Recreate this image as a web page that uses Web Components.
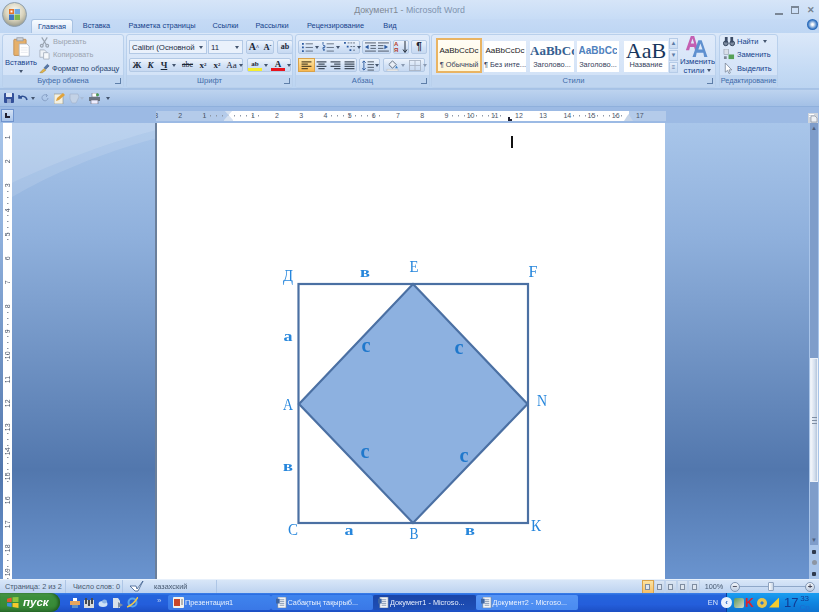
<!DOCTYPE html>
<html lang="ru"><head><meta charset="utf-8"><title>Word</title>
<style>html,body{margin:0;padding:0;overflow:hidden;background:#8fb0dc}body{font-family:"Liberation Sans",sans-serif}</style>
</head><body>
<x-word></x-word>
<script>
const IC={
paste:'<svg width="19" height="20" viewBox="0 0 24 26"><rect x="2" y="3" width="16" height="21" rx="1" fill="#e6b06a" stroke="#b8864a"/><rect x="6" y="1" width="8" height="4" fill="#d0d3d8" stroke="#939aa5"/><path d="M9 9h10l3 3v13H9z" fill="#fff" stroke="#a6b2c4"/><path d="M11 14h9M11 17h9M11 20h9" stroke="#e0e4ea"/></svg>',
scissors:'<svg width="11" height="12" viewBox="0 0 12 12" fill="none" stroke="#9aa4b1" stroke-width="1.3"><path d="M3 1l5 8M9 1L4 9"/><circle cx="3" cy="10" r="1.5"/><circle cx="9" cy="10" r="1.5"/></svg>',
copy:'<svg width="11" height="11" viewBox="0 0 12 12"><path d="M1 1h5l2 2v6H1z" fill="#eef2f7" stroke="#aab4c2"/><path d="M5 4h5l1 1v6H5z" fill="#f6f8fb" stroke="#aab4c2"/></svg>',
painter:'<svg width="11" height="11" viewBox="0 0 13 12"><path d="M1 11l5-5 2 2-4 3z" fill="#e6b84a" stroke="#9b7a2a" stroke-width=".6"/><path d="M6 5l4-4 2 2-4 4z" fill="#5577a8" stroke="#34507c" stroke-width=".6"/></svg>',
bullets:'<svg width="12" height="10" viewBox="0 0 13 11"><path d="M1 1h2v2H1zM1 5h2v2H1zM1 9h2v2H1z" fill="#2b5aa0"/><path d="M5 2h8M5 6h8M5 10h8" stroke="#5d6a7c"/></svg>',
numbers:'<svg width="12" height="10" viewBox="0 0 13 11"><path d="M1 0v3M1 4h2v2H1v2h2M1 9h2" stroke="#2b5aa0" fill="none"/><path d="M5 2h8M5 6h8M5 10h8" stroke="#5d6a7c"/></svg>',
multi:'<svg width="13" height="10" viewBox="0 0 14 11"><path d="M1 0h2v2H1zM4 4h2v2H4zM7 8h2v2H7z" fill="#2b5aa0"/><path d="M5 1h9M8 5h6M11 9h3" stroke="#5d6a7c" stroke-dasharray="2 1"/></svg>',
outdent:'<svg width="12" height="10" viewBox="0 0 13 11"><path d="M1 1h12M7 4h6M7 7h6M1 10h12" stroke="#44505f"/><path d="M5 3v5L1 5.500z" fill="#2b5aa0"/></svg>',
indent:'<svg width="12" height="10" viewBox="0 0 13 11"><path d="M1 1h12M1 4h6M1 7h6M1 10h12" stroke="#44505f"/><path d="M8 3v5l4-2.500z" fill="#2b5aa0"/></svg>',
sort:'<svg width="14" height="12" viewBox="0 0 14 12"><path d="M11 0v11M9 8.500l2 3 2-3" stroke="#222c3a" fill="none"/></svg>',
left:'<svg width="11" height="9" viewBox="0 0 11 10"><path d="M0 1h11M0 3.500h7M0 6h11M0 8.500h7" stroke="#5a4a2a" stroke-width="1.200"/></svg>',
center:'<svg width="11" height="9" viewBox="0 0 11 10"><path d="M0 1h11M2 3.500h7M0 6h11M2 8.500h7" stroke="#44505f" stroke-width="1.200"/></svg>',
right:'<svg width="11" height="9" viewBox="0 0 11 10"><path d="M0 1h11M4 3.500h7M0 6h11M4 8.500h7" stroke="#44505f" stroke-width="1.200"/></svg>',
justify:'<svg width="11" height="9" viewBox="0 0 11 10"><path d="M0 1h11M0 3.500h11M0 6h11M0 8.500h11" stroke="#44505f" stroke-width="1.200"/></svg>',
spacing:'<svg width="12" height="11" viewBox="0 0 13 12"><path d="M2 1v10M0 3l2-2 2 2M0 9l2 2 2-2" stroke="#2b5aa0" fill="none"/><path d="M6 2h7M6 5h7M6 8h7M6 11h7" stroke="#44505f"/></svg>',
shade:'<svg width="13" height="12" viewBox="0 0 14 13"><path d="M3 6l4-4 4 4-4 4z" fill="#e8eef6" stroke="#5d6a7c"/><path d="M11 7l2 3h-3z" fill="#3c7fc2"/><rect x="1" y="11" width="12" height="2" fill="#f3f3f3" stroke="#aaa" stroke-width=".4"/></svg>',
border:'<svg width="12" height="11" viewBox="0 0 13 12" fill="none" stroke="#aab5c6"><rect x=".5" y=".5" width="12" height="11"/><path d="M6.500 0v12M0 6h13"/></svg>',
save:'<svg width="10" height="10" viewBox="0 0 10 10"><rect width="10" height="10" rx="1" fill="#33509a"/><rect x="2" y="0" width="6" height="4" fill="#dfe7f5"/><rect x="3" y="6" width="4" height="4" fill="#8ea2cc"/></svg>',
undo:'<svg width="10" height="9" viewBox="0 0 10 9" fill="none"><path d="M1 1v3h3M1.500 4C3 1.500 8 1.500 9 6" stroke="#2e4f93" stroke-width="1.500"/></svg>',
redo:'<svg width="8" height="8" viewBox="0 0 8 8" fill="none"><path d="M6 1.500A3 3 0 1 0 7 4M5 0l1.500 1.500L5 3" stroke="#87a0c6"/></svg>',
edit:'<svg width="11" height="11" viewBox="0 0 11 11"><rect y="1" width="9" height="10" fill="#f3f0e2" stroke="#8f8f80" stroke-width=".6"/><path d="M2 8l1-3 6-5 2 2-6 5z" fill="#e0a33c"/></svg>',
shape:'<svg width="13" height="11" viewBox="0 0 13 11"><path d="M1 1h8l1 3-3 6H3L1 6z" fill="#c3d2e6" stroke="#9fb0c9" stroke-width=".6"/></svg>',
print:'<svg width="11" height="11" viewBox="0 0 11 11"><rect x="3" y="0" width="5" height="4" fill="#fff" stroke="#667" stroke-width=".6"/><rect y="4" width="11" height="4" fill="#6a7480"/><rect x="2" y="7" width="7" height="4" fill="#eef" stroke="#667" stroke-width=".6"/><circle cx="8.500" cy="1.800" r="1.500" fill="#4c9b52"/></svg>',
find:'<svg width="12" height="11" viewBox="0 0 13 12"><circle cx="3" cy="8" r="2.600" fill="#7d8ba0" stroke="#2f3e55"/><circle cx="10" cy="8" r="2.600" fill="#7d8ba0" stroke="#2f3e55"/><path d="M2 1h3v6H2zM8 1h3v6H8z" fill="#3c4c66"/></svg>',
replace:'<svg width="12" height="11" viewBox="0 0 13 12"><rect x="1" y="0" width="5" height="6" fill="#d9dfe8" stroke="#7b8594" stroke-width=".5"/><rect x="6" y="6" width="6" height="5" fill="#55a056"/><path d="M1 8h3v3H1z" fill="#7b8594"/></svg>',
select:'<svg width="9" height="11" viewBox="0 0 9 12"><path d="M1 0v10l2.500-2 1.500 3.500 1.500-.7L5 7.500h3z" fill="#fff" stroke="#6f7d90" stroke-width=".8"/></svg>',
styles:'<svg width="25" height="21" viewBox="0 0 30 25"><path d="M7 0h4l5 17h-4l-1-4H6l-1 4H1zM7 9h4l-2-6z" fill="#c45fb2"/><path d="M16 5h4l7 20h-4l-1-5h-8l-1 5h-4zM16 16h5l-2.500-7z" fill="#5f90cf"/></svg>',
spell:'<svg width="14" height="11" viewBox="0 0 14 11"><path d="M0 5h6l1 3 6-8-5 10H5z" fill="#fff" stroke="#3a5a8c" stroke-width=".8"/></svg>',
office:'<svg width="25" height="25" viewBox="0 0 25 25"><defs><radialGradient id="o" cx=".5" cy=".35" r=".7"><stop offset="0" stop-color="#fbfbf6"/><stop offset=".55" stop-color="#d9d3bc"/><stop offset="1" stop-color="#8b8e82"/></radialGradient></defs><circle cx="12.500" cy="12.500" r="12" fill="url(#o)" stroke="#8d9fb0"/><path d="M7 7h5v5H7z" fill="#e3742a"/><path d="M12.500 7H18v5h-5.500z" fill="#6fa8e0"/><path d="M7 12.500h5V18H7z" fill="#3f78c4"/><path d="M12.500 12.500H18V18h-5.500z" fill="#7ab84c"/><path d="M8.500 8.500h2v2h-2z" fill="#fff"/></svg>',
winflag:'<svg width="12" height="11" viewBox="0 0 13 12"><path d="M0 2l5-1.500V5.500H0z" fill="#e8582a"/><path d="M6 .300L12.500 0v5.500H6z" fill="#8cc63f"/><path d="M0 6.500h5V11L0 10z" fill="#3e8fe0"/><path d="M6 6.500h6.500V12L6 11z" fill="#f6c92d"/></svg>',
ppt:'<svg width="11" height="11" viewBox="0 0 11 11"><rect x="0" y="0" width="11" height="11" rx="1" fill="#f2f2ee"/><rect x="1" y="2" width="6" height="7" fill="#c9462a"/><path d="M8 3h2M8 5h2M8 7h2" stroke="#777"/></svg>',
doc:'<svg width="11" height="11" viewBox="0 0 12 12"><rect x="2" y="0" width="9" height="12" fill="#f3f5f8" stroke="#6a7c96" stroke-width=".7"/><path d="M4 3h5M4 5h5M4 7h5M4 9h5" stroke="#8496b0"/><path d="M0 2h4v5H0z" fill="#3c64a4"/></svg>',
rt:'<svg width="10" height="10" viewBox="0 0 10 10"><rect width="10" height="10" fill="#cfd5dd"/><path d="M1 1h5v1H1zM1 3h3v1H1z" fill="#fff"/><path d="M3 3h4l2 2v4H3z" fill="#eef1f5" stroke="#7a8596" stroke-width=".6"/></svg>',
ql1:'<svg width="10" height="10" viewBox="0 0 10 10"><path d="M0 3h10v4H0z" fill="#e7a55e"/><path d="M3 0h4v3H3z" fill="#fff"/><path d="M2 7h6v3H2z" fill="#5d90c9"/></svg>',
ql2:'<svg width="10" height="10" viewBox="0 0 10 10"><rect y="2" width="10" height="8" fill="#d9dadb"/><path d="M1 0h2v6H1zM4 2h2v6H4zM7 0h2v6H7z" fill="#454a52"/></svg>',
ql3:'<svg width="10" height="10" viewBox="0 0 10 10"><ellipse cx="5" cy="6" rx="4.500" ry="3" fill="#cfe2f7"/><ellipse cx="6.500" cy="3.500" rx="2.500" ry="2" fill="#8fb6e6"/></svg>',
ql4:'<svg width="11" height="10" viewBox="0 0 11 10"><path d="M1 0h5l2 3v7H1z" fill="#d9e1ea"/><path d="M6 4l5 3-5 3z" fill="#7f8fa4"/></svg>',
ql5:'<svg width="11" height="11" viewBox="0 0 11 11"><ellipse cx="5.500" cy="5.500" rx="4" ry="4" fill="none" stroke="#58a4ee" stroke-width="2"/><path d="M0 10C3 9 8 5 11 0" stroke="#f0c94a" stroke-width="1.500" fill="none"/></svg>'
};
const def=(n,css,html)=>customElements.define(n,class extends HTMLElement{connectedCallback(){if(this.shadowRoot)return;const s=this.attachShadow({mode:'open'});s.innerHTML='<style>'+css+'</style>'+(typeof html==='function'?html(this):html);}});
def('x-ic',':host{display:inline-flex;align-items:center;justify-content:center;line-height:0;flex:none}',h=>IC[h.getAttribute('n')]||'');
def('x-arr',':host{display:inline-block;flex:none;width:0;height:0;border:2px solid transparent;border-top:3px solid #44556f;border-bottom:0;margin-left:3px}','');
def('x-title',`:host{display:grid;grid-template-columns:1fr auto 1fr;align-items:center;height:19px;background:linear-gradient(#d6e5f8,#c7dcf6);font-size:8.800px;color:#7f8893}
.t b{font-weight:400;color:#8093ae}
.w{display:flex;justify-content:flex-end;gap:8px;padding-right:4px;align-items:center}.w i{display:block;width:8px;height:8px;box-sizing:border-box}
.m{border-bottom:2px solid #7a8695;height:6px!important;margin-top:4px}.x{border:1px solid #7a8695;border-top-width:2px}
.c{color:#77828f;font:700 9px/8px "Liberation Sans",sans-serif}`,
`<div></div><div class="t">Документ1 - <b>Microsoft Word</b></div><div class="w"><i class="m"></i><i class="x"></i><i class="c">✕</i></div>`);
def('x-tabs',`:host{display:flex;height:14px;background:linear-gradient(#c5daf5,#bed6f3);padding-left:31px;font-size:7.400px;color:#15428b;line-height:14px;position:relative}
span{text-align:center;white-space:nowrap;flex:none}
.a{background:linear-gradient(#f7fbff,#d8e6f8);border:1px solid #a8c2e2;border-bottom:0;border-radius:3px 3px 0 0;box-sizing:border-box;line-height:13px}
.h{position:absolute;right:1px;top:0;width:11px;height:11px;border-radius:50%;background:radial-gradient(#fff 10%,#2d6fbf 60%,#1b4d93)}`,
`<span class="a" style="width:42px">Главная</span><span style="width:47px">Вставка</span><span style="width:84px">Разметка страницы</span><span style="width:43px">Ссылки</span><span style="width:50px">Рассылки</span><span style="width:77px">Рецензирование</span><span style="width:32px">Вид</span><i class="h"></i>`);
def('x-ribbon',`:host{display:flex;gap:2px;height:56px;padding:1px 0 0 2px;box-sizing:border-box;background:linear-gradient(#dbe8f9,#c4daf4 70%,#bcd4f1);border-bottom:1px solid #a6c2e6}`,'<slot></slot>');
def('x-group',`:host{display:flex;flex-direction:column;flex:none;box-sizing:border-box;border:1px solid #b9d0ec;border-radius:3px;background:linear-gradient(#e0ebfa,#cfe0f6);overflow:hidden}
.b{flex:1;display:flex;min-height:0}
.f{height:12px;flex:none;background:#bfd5f0;color:#3e6aa8;font-size:var(--f,7.600px);line-height:12px;text-align:center;position:relative;white-space:nowrap}
.f i{position:absolute;right:2px;top:3px;width:6px;height:6px;border-right:1px solid #5e7ea8;border-bottom:1px solid #5e7ea8;box-sizing:border-box}`,
h=>`<div class="b"><slot></slot></div><div class="f">${h.getAttribute('label')}${h.hasAttribute('launcher')?'<i></i>':''}</div>`);
def('x-col',`:host{display:flex;flex-direction:column;box-sizing:border-box}`,'<slot></slot>');
def('x-row',`:host{display:flex;align-items:center}`,'<slot></slot>');
def('x-paste',`:host{display:flex;flex-direction:column;align-items:center;width:36px;flex:none;font-size:7.600px;color:#15428b;padding-top:2px;box-sizing:border-box}
span{line-height:10px;margin-top:1px}`,`<x-ic n="paste"></x-ic><span>Вставить</span><x-arr style="margin:2px 0 0"></x-arr>`);
def('x-small',`:host{display:flex;align-items:center;height:14px;gap:2px;font-size:7.500px;color:#15428b;white-space:nowrap}
:host([off]){color:#9ba4b0}`,'<slot name="i"></slot><slot></slot>');
def('x-btns',`:host{display:flex;align-items:center;height:14px;box-sizing:border-box;border:1px solid #b3c9e5;border-radius:2px;background:linear-gradient(#eef4fc,#d3e2f6 55%,#c7d9f1);flex:none}`,'<slot></slot>');
def('x-b',`:host{display:flex;align-items:center;justify-content:center;height:12px;flex:none;font:700 9px/12px "Liberation Serif",serif;color:#1b2736;box-sizing:border-box}
:host([on]){background:linear-gradient(#fde7a8,#f8b850);outline:1px solid #d9a24a}`,'<slot></slot>');
def('x-combo',`:host{display:flex;align-items:center;height:14px;box-sizing:border-box;border:1px solid #b3c9e5;background:#eaf1fb;font-size:7.800px;color:#1d2c44;padding:0 3px 0 2px;overflow:hidden;white-space:nowrap;flex:none}
span{flex:1;overflow:hidden}`,'<span><slot></slot></span><x-arr></x-arr>');
def('x-style',`:host{display:flex;flex-direction:column;align-items:center;box-sizing:border-box;background:#fff;height:31px;overflow:hidden;flex:none;color:#1c1c1c;padding-top:3px;margin-top:3px}
:host([on]){border:2px solid #e9b463;background:linear-gradient(#fffdf6,#fff6d8);height:35px;padding-top:4px;margin-top:0}
.s{font:8px/14px "Liberation Sans",sans-serif;white-space:nowrap;height:14px;overflow:hidden;max-width:100%}
.l{font-size:7.400px;line-height:12px;margin-top:1px;white-space:nowrap;color:#34405a}`,
h=>`<div class="s" style="${h.getAttribute('sx')||''}">${h.getAttribute('s')}</div><div class="l">${h.getAttribute('l')}</div>`);
def('x-gallerybtns',`:host{display:flex;flex-direction:column;gap:1px;width:9px;flex:none}
i{display:flex;height:11px;background:linear-gradient(#e6effb,#c9dbf2);border:1px solid #b6cce8;box-sizing:border-box;font:normal 6px/9px "Liberation Sans",sans-serif;color:#5a7aa6;align-items:center;justify-content:center}`,`<i>▲</i><i>▼</i><i>≡</i>`);
def('x-qat',`:host{display:flex;align-items:center;height:18px;box-sizing:border-box;border-top:1px solid #a8c3e6;border-bottom:1px solid #8fb0dc;background:linear-gradient(#bdd3ef,#a3c0e6);padding-left:4px;flex:none}`,
`<x-ic n="save"></x-ic><x-ic n="undo" style="margin-left:4px"></x-ic><x-arr style="margin-left:3px"></x-arr><x-ic n="redo" style="margin-left:6px"></x-ic><x-ic n="edit" style="margin-left:5px"></x-ic><x-ic n="shape" style="margin-left:4px"></x-ic><x-arr style="margin-left:-2px;border-top-color:#a9bcd6"></x-arr><x-ic n="print" style="margin-left:5px"></x-ic><x-arr style="margin-left:6px"></x-arr>`);
def('x-hruler',`:host{display:flex;height:16px;background:#9cbae4;flex:none;position:relative;padding-top:4px;box-sizing:border-box}
.tab{width:13px;height:13px;margin:-2px 0 0 1px;border:1px solid #6f94cf;background:linear-gradient(#d5e3f6,#a9c4e9);box-sizing:border-box;display:flex;align-items:center;justify-content:center;flex:none}
.tab i{width:5px;height:5px;border-left:2px solid #223;border-bottom:2px solid #223;box-sizing:border-box}
.r{margin-left:142px;width:510px;height:10px;overflow:hidden;background:linear-gradient(90deg,#b4cbea 73px,#fff 73px,#fff 473px,#b4cbea 473px);display:flex;position:relative}
.r div{display:flex;margin-left:-12px;flex:none;background:repeating-linear-gradient(90deg,transparent 0 5.550px,#8e97a5 5.550px 6.050px) 0 4px/100% 1.500px no-repeat}
.r span{width:24.200px;flex:none;text-align:center;font:7px/10px "Liberation Sans",sans-serif;color:#4a5568}
.m{position:absolute;top:-1px;width:9px;height:11px}
.m1{left:68px;background:#d7e2f1;clip-path:polygon(0 0,100% 0,50% 45%,100% 90%,100% 100%,0 100%,0 90%,50% 45%)}
.m2{left:468px;top:3px;height:7px;background:#c7d5e8;clip-path:polygon(50% 0,100% 100%,0 100%)}
.l{position:absolute;left:352px;top:6px;width:4px;height:4px;border-left:2px solid #223;border-bottom:2px solid #223;box-sizing:border-box}
.rt{margin-left:auto;margin-right:1px;margin-top:1px}`,
()=>{const nm=[3,2,1,'',1,2,3,4,5,6,7,8,9,10,11,12,13,14,15,16,17,''].map(n=>`<span>${n}</span>`).join('');return `<div class="tab"><i></i></div><div class="r"><div>${nm}</div><i class="m m1"></i><i class="m m2"></i><i class="l"></i></div><x-ic class="rt" n="rt"></x-ic>`});
def('x-vruler',`:host{display:block;width:9px;margin-left:3px;background:#fff;overflow:hidden;flex:none;align-self:stretch;padding-top:2px;box-sizing:border-box}
div{display:flex;flex-direction:column;background:repeating-linear-gradient(transparent 0 5.550px,#8a93a0 5.550px 6.050px) 4px 0/1.500px 100% no-repeat}
span{height:24.200px;flex:none;writing-mode:vertical-rl;transform:rotate(180deg);text-align:center;font:7px/9px "Liberation Sans",sans-serif;color:#4a5568}`,
()=>`<div>${Array.from({length:19},(_,i)=>`<span>${i+1}</span>`).join('')}</div>`);
def('x-scroll',`:host{display:flex;flex-direction:column;align-items:center;width:10px;flex:none;margin-left:1px;background:#a8c4e9;position:relative}
.t{flex:1;width:8px;background:#7f9dca;display:flex;flex-direction:column;align-items:center;font:6px/10px "Liberation Sans",sans-serif;color:#4d5f7d}
.sp{height:225px;flex:none}.sp2{flex:1}
.th{width:8px;height:124px;flex:none;background:linear-gradient(90deg,#f3f6fb,#d4dfee 60%,#b6c6db);display:flex;align-items:center;justify-content:center;box-sizing:border-box;border:1px solid #ecf1f8}
.th i{display:block;width:5px;height:5px;border-top:1px solid #7f8ea3;border-bottom:1px solid #7f8ea3;background:linear-gradient(transparent 40%,#7f8ea3 40% 60%,transparent 60%)}
.n{height:34px;width:10px;flex:none;display:flex;flex-direction:column;align-items:center;justify-content:space-around;padding:2px 0 0;box-sizing:border-box}
.n i{display:block;width:4px;height:4px;background:#2f3a4d;border-radius:1px}.n .o{border-radius:50%;width:5px;height:5px;background:#8d96a3}`,
`<div class="t"><span>▲</span><div class="sp"></div><div class="th"><i></i></div><div class="sp2"></div><span>▼</span></div><div class="n"><i></i><i class="o"></i><i></i></div>`);
def('x-page',`:host{display:block;width:508px;flex:none;align-self:stretch;background:#fff;position:relative;overflow:hidden;box-shadow:-2px 0 0 #6b7f9a}
svg{display:block;margin:127px 0 0 113px}
.cur{position:absolute;left:354px;top:13px;width:2px;height:12px;background:#111}
text{font-family:"Liberation Serif",serif;fill:#2686dc;font-size:16.500px;text-anchor:middle}
.b{font-weight:700;font-size:15px}.c{font-weight:700;font-size:22px;fill:#1f78cc}`,
`<i class="cur"></i><svg width="290" height="300" viewBox="270 250 290 300">
<rect x="298.500" y="284" width="229.500" height="239" fill="#fff" stroke="#4b70a3" stroke-width="2.200"/>
<path d="M413 284L527.500 404L413 523L299 404z" fill="#8db1e0" stroke="#4b70a3" stroke-width="2.200"/>
<text x="288" y="281" textLength="10" lengthAdjust="spacingAndGlyphs">Д</text><text class="b" x="365" y="277" textLength="10" lengthAdjust="spacingAndGlyphs">в</text><text x="414" y="272" textLength="9" lengthAdjust="spacingAndGlyphs">Е</text><text x="533" y="277" textLength="9" lengthAdjust="spacingAndGlyphs">F</text>
<text class="b" x="288" y="341" textLength="9" lengthAdjust="spacingAndGlyphs">а</text><text class="c" x="366" y="352" textLength="9" lengthAdjust="spacingAndGlyphs">с</text><text class="c" x="459" y="354" textLength="9" lengthAdjust="spacingAndGlyphs">с</text><text class="c" x="365" y="458" textLength="9" lengthAdjust="spacingAndGlyphs">с</text><text class="c" x="464" y="462" textLength="9" lengthAdjust="spacingAndGlyphs">с</text>
<text x="288" y="410" textLength="10" lengthAdjust="spacingAndGlyphs">А</text><text x="542" y="406" textLength="10" lengthAdjust="spacingAndGlyphs">N</text><text class="b" x="288" y="471" textLength="10" lengthAdjust="spacingAndGlyphs">в</text>
<text x="293" y="535" textLength="10" lengthAdjust="spacingAndGlyphs">С</text><text class="b" x="349" y="535" textLength="9" lengthAdjust="spacingAndGlyphs">а</text><text x="414" y="539" textLength="9" lengthAdjust="spacingAndGlyphs">В</text><text class="b" x="470" y="535" textLength="10" lengthAdjust="spacingAndGlyphs">в</text><text x="536" y="531" textLength="10" lengthAdjust="spacingAndGlyphs">К</text></svg>`);
def('x-main',`:host{display:flex;flex:1;min-height:0;position:relative;overflow:hidden;background:linear-gradient(#a9c6ea 0,#8fb0dc 25%,#5277ad 76%,#6a94cf 100%)}
svg{position:absolute;left:0;top:0}
.g{flex:1}`,
`<svg width="819" height="456" viewBox="0 123 819 456"><path d="M12 123H157V130C100 145 50 165 12 183z" fill="#fff" opacity=".22"/><path d="M12 183C50 165 100 145 157 130V138C100 153 50 175 12 197z" fill="#fff" opacity=".12"/></svg>
<x-vruler></x-vruler><div style="width:145px;flex:none"></div><x-page></x-page><div class="g"></div><x-scroll></x-scroll>`);
def('x-status',`:host{display:flex;align-items:center;height:14px;flex:none;box-sizing:border-box;background:linear-gradient(#d8e6f8,#bdd3f0);border-top:1px solid #e7f0fb;font-size:7.300px;color:#46586f;white-space:nowrap}
.s{padding:0 5px;border-right:1px solid #aec6e6;height:13px;line-height:13px;display:flex;align-items:center;box-sizing:border-box;flex:none}
.sp{flex:1}.v{display:flex;width:58px;height:14px;background:#a9c1e2;flex:none;margin-left:1px}.v i{flex:1;box-sizing:border-box;border:1px solid #c0d3ec;background:linear-gradient(#dbe6f4,#bccee6);display:flex;align-items:center;justify-content:center}
.v i::after{content:"";width:5px;height:6px;border:1px solid #7f8da0;background:#dfe6ef;box-sizing:border-box}
.v .on{background:linear-gradient(#fde3a0,#f5bf66);border-color:#d9a24a}
.z{width:26px;text-align:center;flex:none}.o{width:10px;height:10px;border-radius:50%;border:1px solid #8095b2;background:linear-gradient(#f4f7fb,#bccbe0);box-sizing:border-box;flex:none;display:flex;align-items:center;justify-content:center;font:700 8px/8px "Liberation Sans",sans-serif;color:#445}
.tr{width:65px;height:1px;background:#8fa8c9;position:relative;flex:none}.tr i{position:absolute;left:28px;top:-4px;width:6px;height:9px;background:linear-gradient(90deg,#fff,#c6d3e3);border:1px solid #8fa3bf;box-sizing:border-box;border-radius:1px}`,
`<div class="s" style="width:66px">Страница: 2 из 2</div><div class="s" style="width:57px;padding-left:7px">Число слов: 0</div><div class="s" style="width:94px;padding-left:7px;gap:10px"><x-ic n="spell"></x-ic>казахский</div><div class="sp"></div><div class="v"><i class="on"></i><i></i><i></i><i></i><i></i></div><div class="z" style="margin-left:1px">100%</div><div class="o" style="margin-left:3px">−</div><div class="tr"><i></i></div><div class="o">+</div><div style="width:4px;flex:none"></div>`);
def('x-taskbar',`:host{display:flex;align-items:center;height:19px;flex:none;background:linear-gradient(#3d82ea 0,#2464dc 12%,#245edb 60%,#1c4fc4 100%);color:#e8f0fd;font-size:7.300px;white-space:nowrap;overflow:hidden}
.st{width:60px;height:19px;flex:none;box-sizing:border-box;background:linear-gradient(#4f9e4c,#3c8f3c 20%,#378a37 70%,#2d712e);border-radius:0 9px 9px 0;display:flex;align-items:center;gap:4px;padding-left:7px;font:italic 700 11.500px/19px "Liberation Sans",sans-serif;box-shadow:inset -2px 0 3px #1e5a20;color:#fff}
.q{display:flex;gap:4px;padding-left:10px;width:97px;box-sizing:border-box;flex:none;align-items:center}
.mm{width:11px;flex:none;font-size:8px;color:#bcd0f2;margin-top:-5px}
.t{width:102.500px;height:15px;flex:none;box-sizing:border-box;display:flex;align-items:center;gap:1px;padding-left:5px;background:linear-gradient(#3f84ee,#3a78e6);border-radius:2px;overflow:hidden}
.d{background:linear-gradient(#1a45a8,#1e4fb6)}.li{background:linear-gradient(#5594f5,#4a8bf0)}
.sp{flex:1}.en{margin-right:8px;flex:none;color:#dce8fb}
.tray{width:93px;height:19px;flex:none;box-sizing:border-box;background:linear-gradient(#1b9ef0,#0f86e1 50%,#0d73d0);border-left:1px solid #0c3a9a;display:flex;align-items:center;gap:1px;position:relative}
.tray i{display:block;width:10px;height:10px;flex:none}
.c{width:11px;height:11px;border-radius:50%;background:#eaf2fd;color:#1f62c8;font:700 8px/11px "Liberation Sans",sans-serif;text-align:center;margin-left:-6px;flex:none}
.clock{font:13px/18px "Liberation Sans",sans-serif;margin-left:4px;color:#123a92;display:flex;align-items:flex-start}
.clock small{display:flex;flex-direction:column;align-items:center;font-size:8px;line-height:9px;margin-left:1px}`,
`<div class="st"><x-ic n="winflag"></x-ic>пуск</div>
<div class="q"><x-ic n="ql1"></x-ic><x-ic n="ql2"></x-ic><x-ic n="ql3"></x-ic><x-ic n="ql4"></x-ic><x-ic n="ql5"></x-ic></div>
<div class="mm">»</div>
<div class="t"><x-ic n="ppt"></x-ic>Презентация1</div><div class="t"><x-ic n="doc"></x-ic>Сабақтың тақырыб...</div><div class="t d"><x-ic n="doc"></x-ic>Документ1 - Microso...</div><div class="t li"><x-ic n="doc"></x-ic>Документ2 - Microso...</div>
<div class="sp"></div><div class="en">EN</div>
<div class="tray"><span class="c">‹</span><i style="background:linear-gradient(135deg,#5f9a5a,#d6d9c8);border-radius:2px;margin-left:1px"></i><i style="color:#e0202a;font:900 12px/10px 'Liberation Sans',sans-serif">K</i><i style="border-radius:50%;background:radial-gradient(#2a78d0 20%,#e8c44a 25% 70%,#a8842a);margin-left:1px"></i><i style="background:#f5cc2e;clip-path:polygon(100% 0,100% 100%,0 100%);margin-left:1px"></i><div class="clock">17<small><span>33</span><span style="color:#1f6ad0">Ср</span></small></div></div>`);
def('x-word',`:host{display:flex;flex-direction:column;width:819px;height:612px;overflow:hidden;position:relative;filter:blur(.35px);font-family:"Liberation Sans",sans-serif}
.ob{position:absolute;left:2px;top:2px;z-index:3}`,
`<x-title></x-title><x-tabs></x-tabs>
<x-ribbon>
<x-group label="Буфер обмена" launcher style="width:122px"><x-paste></x-paste><x-col>
<x-small off><x-ic slot="i" n="scissors"></x-ic><span style="margin-left:1px">Вырезать</span></x-small><x-small off><x-ic slot="i" n="copy"></x-ic><span style="margin-left:1px">Копировать</span></x-small><x-small style="color:#24426f"><x-ic slot="i" n="painter"></x-ic>Формат по образцу</x-small></x-col></x-group>
<x-group label="Шрифт" launcher style="width:167px"><x-col style="padding:5px 0 0 2px;gap:4px"><x-row style="gap:1px"><x-combo style="width:78px">Calibri (Основной те</x-combo><x-combo style="width:35px">11</x-combo><x-btns style="margin-left:2px;width:28px"><x-b style="width:14px;font-size:10px">A<sup style="font-size:6px">^</sup></x-b><x-b style="width:13px;font-size:8.500px">A<sup style="font-size:6px">ˇ</sup></x-b></x-btns><x-btns style="margin-left:2px;width:16px"><x-b style="width:14px;font-size:8px">ab</x-b></x-btns></x-row>
<x-row style="gap:4px"><x-btns style="width:114px"><x-b style="width:14px">Ж</x-b><x-b style="width:13px;font-style:italic">К</x-b><x-b style="width:14px;text-decoration:underline">Ч</x-b><x-arr style="margin:0 3px 0 1px"></x-arr><x-b style="width:17px;text-decoration:line-through;font-weight:400;font-size:8px">abc</x-b><x-b style="width:14px">x<sub style="font-size:5px">2</sub></x-b><x-b style="width:14px">x<sup style="font-size:5px">2</sup></x-b><x-b style="width:15px;font-weight:400">Aa</x-b><x-arr style="margin-left:0"></x-arr></x-btns>
<x-btns style="width:44px"><x-b style="width:14px;font-size:7px;border-bottom:3px solid #f5ee30">ab</x-b><x-arr style="margin:0 3px 0 2px"></x-arr><x-b style="width:14px;border-bottom:3px solid #e8141e">A</x-b><x-arr style="margin-left:2px"></x-arr></x-btns></x-row></x-col></x-group>
<x-group label="Абзац" launcher style="width:135px"><x-col style="padding:5px 0 0 2px;gap:4px"><x-row style="gap:2px"><x-btns style="width:62px;gap:1px;padding-left:2px"><x-ic n="bullets"></x-ic><x-arr style="margin:0 2px 0 1px"></x-arr><x-ic n="numbers"></x-ic><x-arr style="margin:0 2px 0 1px"></x-arr><x-ic n="multi"></x-ic><x-arr style="margin-left:0"></x-arr></x-btns><x-btns style="width:29px;justify-content:space-around"><x-ic n="outdent"></x-ic><x-ic n="indent"></x-ic></x-btns><x-btns style="width:16px"><x-b style="width:14px;font:700 6px/6px 'Liberation Sans',sans-serif;color:#b43a2a;display:block;position:relative">A<br>Я<x-ic n="sort" style="position:absolute;left:0;top:0"></x-ic></x-b></x-btns><x-btns style="width:16px"><x-b style="width:14px;font:700 10px/12px 'Liberation Sans',sans-serif">¶</x-b></x-btns></x-row>
<x-row style="gap:2px"><x-btns style="width:59px"><x-b on style="width:15px"><x-ic n="left"></x-ic></x-b><x-b style="width:14px"><x-ic n="center"></x-ic></x-b><x-b style="width:14px"><x-ic n="right"></x-ic></x-b><x-b style="width:14px"><x-ic n="justify"></x-ic></x-b></x-btns><x-btns style="width:21px;padding-left:2px"><x-ic n="spacing"></x-ic><x-arr style="margin-left:1px"></x-arr></x-btns><x-btns style="width:42px;margin-left:1px;padding-left:2px"><x-ic n="shade"></x-ic><x-arr style="margin:0 4px 0 2px;border-top-color:#8a9ab2"></x-arr><x-ic n="border"></x-ic><x-arr style="margin-left:2px;border-top-color:#8a9ab2"></x-arr></x-btns></x-row></x-col></x-group>
<x-group label="Стили" launcher style="width:285px;margin-left:-1px"><x-row style="padding:3px 0 0 4px;align-items:flex-start;height:41px;box-sizing:border-box">
<x-style on s="AaBbCcDc" l="¶ Обычный" style="width:46px"></x-style>
<x-style s="AaBbCcDc" l="¶ Без инте..." style="width:42px;margin-left:2px"></x-style>
<x-style s="AaBbCc" l="Заголово..." sx="font:700 13px/14px 'Liberation Serif',serif;color:#365f91" style="width:44px;margin-left:4px"></x-style>
<x-style s="AaBbCc" l="Заголово..." sx="font:700 10px/14px 'Liberation Sans',sans-serif;color:#4f81bd" style="width:42px;margin-left:3px"></x-style>
<x-style s="AaB" l="Название" sx="font:22px/14px 'Liberation Serif',serif;color:#17365d" style="width:44px;margin-left:5px"></x-style>
<x-gallerybtns style="margin-left:1px"></x-gallerybtns>
<x-col style="width:35px;margin:-2px 0 0 2px;align-items:center;font-size:7.800px;color:#15428b;line-height:9px;text-align:center;flex:none"><x-ic n="styles" style="height:21px"></x-ic><span>Изменить</span><span>стили <x-arr style="margin:0 0 1px 1px"></x-arr></span></x-col>
</x-row></x-group>
<x-group label="Редактирование" style="width:59px;margin-left:1px;--f:7.300px"><x-col style="padding:0 0 0 3px"><x-small><x-ic slot="i" n="find"></x-ic>Найти <x-arr></x-arr></x-small><x-small><x-ic slot="i" n="replace"></x-ic>Заменить</x-small><x-small style="gap:4px;padding-left:1px"><x-ic slot="i" n="select"></x-ic>Выделить <x-arr></x-arr></x-small></x-col></x-group>
</x-ribbon>
<x-qat></x-qat><x-hruler></x-hruler><x-main></x-main><x-status></x-status><x-taskbar></x-taskbar>
<x-ic class="ob" n="office"></x-ic>`);
</script>
</body></html>
